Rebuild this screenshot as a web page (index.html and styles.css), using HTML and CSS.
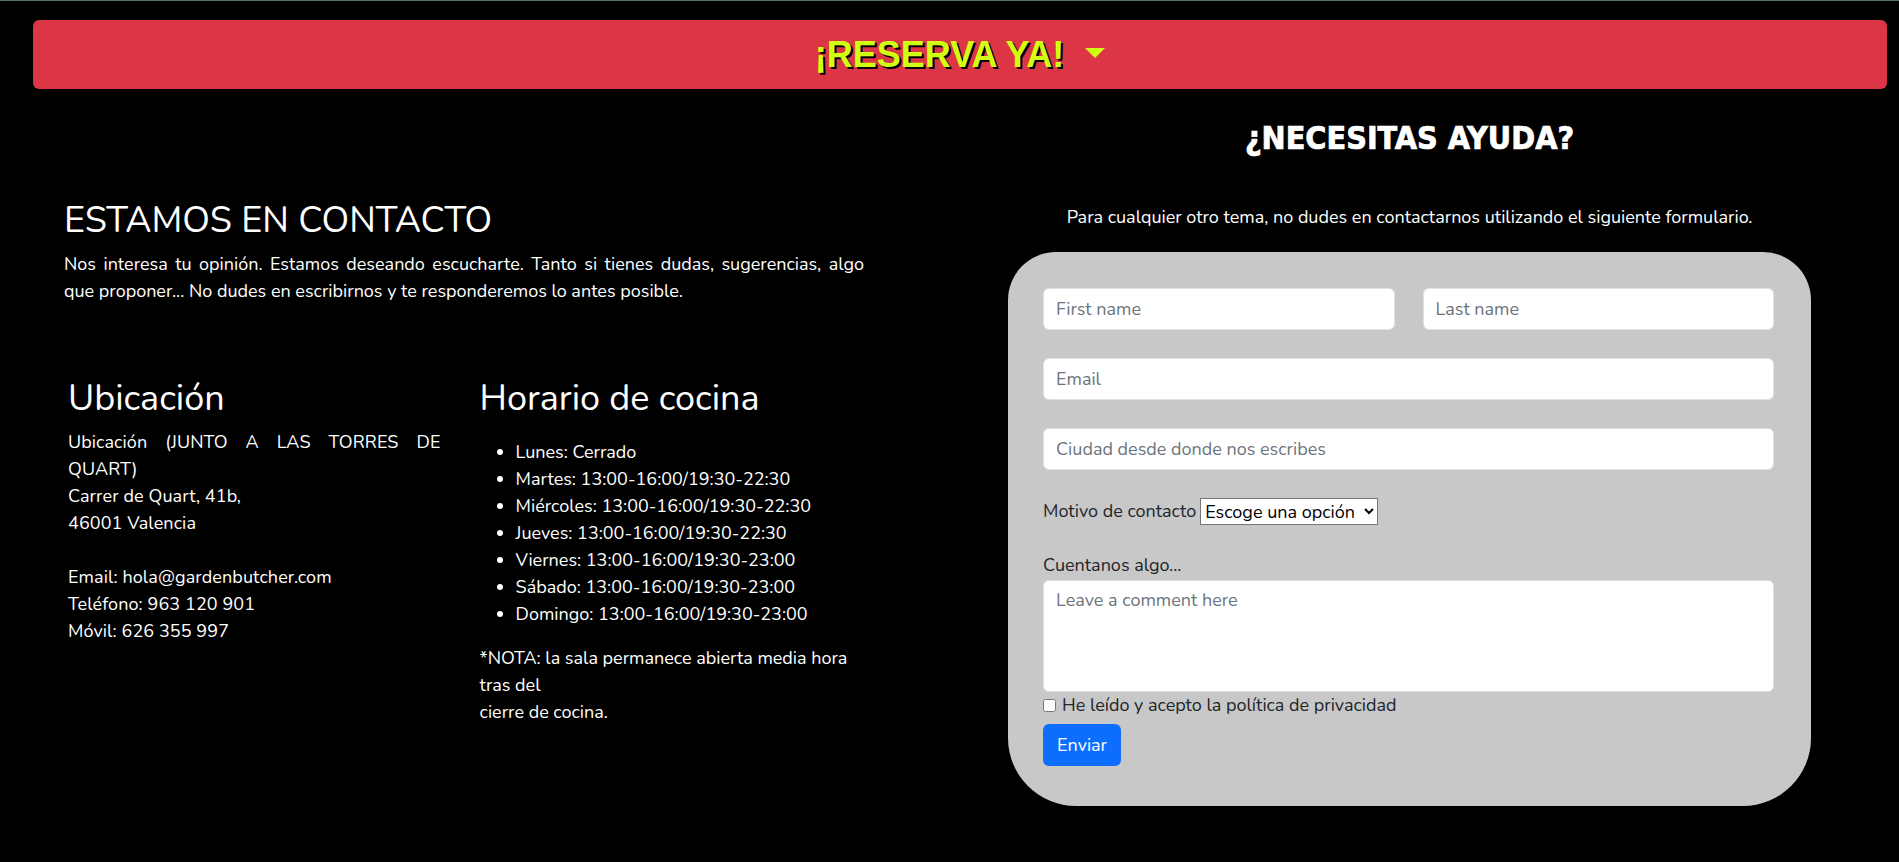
FILE: index.html
```html
<!DOCTYPE html>
<html lang="es">
<head>
<meta charset="utf-8">
<title>Contacto</title>
<link rel="stylesheet" href="styles.css">
</head>
<body>
<div class="reserve-wrap">
  <button class="reserve" type="button"><span class="reserve-text">¡RESERVA YA!</span><span class="caret"></span></button>
</div>
<main class="main">
  <section class="contact">
    <h1 class="contact-title">ESTAMOS EN CONTACTO</h1>
    <p class="intro">Nos interesa tu opinión. Estamos deseando escucharte. Tanto si tienes dudas, sugerencias, algo que proponer... No dudes en escribirnos y te responderemos lo antes posible.</p>
    <div class="info-row">
      <div class="info-col loc">
        <h2 class="info-title">Ubicación</h2>
        <p class="loc-text">Ubicación (JUNTO A LAS TORRES DE QUART)<br>Carrer de Quart, 41b,<br>46001 Valencia<br><br>Email: hola@gardenbutcher.com<br>Teléfono: 963 120 901<br>Móvil: 626 355 997</p>
      </div>
      <div class="info-col hours">
        <h2 class="info-title">Horario de cocina</h2>
        <ul class="hours-list">
          <li>Lunes: Cerrado</li>
          <li>Martes: 13:00-16:00/19:30-22:30</li>
          <li>Miércoles: 13:00-16:00/19:30-22:30</li>
          <li>Jueves: 13:00-16:00/19:30-22:30</li>
          <li>Viernes: 13:00-16:00/19:30-23:00</li>
          <li>Sábado: 13:00-16:00/19:30-23:00</li>
          <li>Domingo: 13:00-16:00/19:30-23:00</li>
        </ul>
        <p class="note">*NOTA: la sala permanece abierta media hora tras del<br>cierre de cocina.</p>
      </div>
    </div>
  </section>
  <section class="help">
    <h2 class="help-title">¿NECESITAS AYUDA?</h2>
    <p class="help-sub">Para cualquier otro tema, no dudes en contactarnos utilizando el siguiente formulario.</p>
    <form class="card">
      <div class="name-row">
        <input class="field" type="text" placeholder="First name">
        <input class="field" type="text" placeholder="Last name">
      </div>
      <input class="field" type="email" placeholder="Email">
      <input class="field" type="text" placeholder="Ciudad desde donde nos escribes">
      <div class="motive-row">
        <label class="motive-label" for="motivo">Motivo de contacto</label>
        <select class="motive-select" id="motivo">
          <option>Escoge una opción</option>
        </select>
      </div>
      <label class="comment-label" for="comment">Cuentanos algo...</label>
      <textarea class="comment" id="comment" placeholder="Leave a comment here"></textarea>
      <label class="privacy"><input class="privacy-check" type="checkbox">He leído y acepto la política de privacidad</label>
      <button class="send" type="button">Enviar</button>
    </form>
  </section>
</main>
</body>
</html>
```

FILE: styles.css
```css
* { box-sizing: border-box; }

body {
  margin: 0;
  background: #000;
  color: #fff;
  border-top: 1px solid #5b6e72;
  font-family: "Nunito", "Noto Sans", "Open Sans", sans-serif;
  font-size: 18px;
  line-height: 27px;
  min-height: 861px;
}

.reserve-wrap {
  padding: 19px 12px 0 33px;
}

.reserve {
  width: 100%;
  height: 69px;
  border: 0;
  border-radius: 6px;
  background: #dc3545;
  display: flex;
  align-items: center;
  justify-content: center;
  gap: 21px;
  cursor: pointer;
  padding: 0;
}

.reserve-text {
  font-family: "Liberation Sans", Arial, sans-serif;
  font-weight: 700;
  font-size: 36px;
  color: #d0ff14;
  text-shadow: 2px 2px 0 #000;
  line-height: 40px;
}

.caret {
  width: 0;
  height: 0;
  border-top: 10px solid #d0ff14;
  border-left: 10px solid transparent;
  border-right: 10px solid transparent;
  margin-bottom: 4px;
}

.main {
  display: flex;
  padding-left: 64px;
}

.contact {
  width: 800px;
  flex: none;
}

.contact-title {
  margin: 111px 0 0;
  font-weight: 400;
  font-size: 36px;
  line-height: 42px;
}

.intro {
  margin: 9px 0 0;
  text-align: justify;
}

.info-row {
  display: flex;
  margin-top: 73px;
}

.info-col.loc {
  width: 378px;
  margin-left: 4px;
}

.info-col.hours {
  width: 390px;
  margin-left: 39px;
}

.info-title {
  margin: 0;
  font-weight: 400;
  font-size: 36px;
  line-height: 42px;
}

.loc-text {
  margin: 9px 0 0;
  text-align: justify;
  letter-spacing: 0.1px;
}

.hours-list {
  margin: 19px 0 0;
  padding-left: 36px;
}

.note {
  margin: 17px 0 0;
}

.help {
  margin-left: 144px;
  width: 803px;
  flex: none;
  display: flex;
  flex-direction: column;
  align-items: center;
}

.help-title {
  margin: 30px 0 0;
  font-family: "DejaVu Sans", sans-serif;
  font-stretch: condensed;
  font-weight: 700;
  font-size: 32px;
  line-height: 38px;
  -webkit-text-stroke: 0.7px #fff;
}

.help-sub {
  margin: 47px 0 0;
}

.card {
  align-self: stretch;
  margin-top: 21px;
  background: #c8c8c8;
  border-radius: 48px 48px 68px 68px;
  padding: 36px 37px 40px 35px;
  display: flex;
  flex-direction: column;
  color: #212529;
}

.name-row {
  display: flex;
  gap: 28px;
  margin-bottom: 28px;
}

.field {
  display: block;
  width: 100%;
  height: 42px;
  border: 1px solid #dee2e6;
  border-radius: 6px;
  background: #fff;
  padding: 0 12px;
  font-family: inherit;
  font-size: 18px;
  color: #212529;
  margin-bottom: 28px;
}

.name-row .field { margin-bottom: 0; }

.field::placeholder,
.comment::placeholder { color: #6c757d; }

.motive-row {
  display: flex;
  align-items: center;
  gap: 4px;
  height: 27px;
}

.motive-select {
  height: 27px;
  width: 178px;
  font-family: inherit;
  font-size: 18px;
  color: #000;
  background: #fff;
  border: 1px solid #767676;
  border-radius: 0;
}

.comment-label {
  margin-top: 27px;
  margin-bottom: 1px;
}

.comment {
  display: block;
  width: 100%;
  height: 112px;
  border: 1px solid #dee2e6;
  border-radius: 6px;
  background: #fff;
  padding: 6px 12px;
  font-family: inherit;
  font-size: 18px;
  line-height: 27px;
  resize: none;
}

.privacy {
  display: flex;
  align-items: center;
}

.privacy-check {
  width: 13px;
  height: 13px;
  margin: 0 6px 0 0;
}

.send {
  align-self: flex-start;
  margin-top: 5px;
  height: 42px;
  padding: 0 14px;
  border: 0;
  border-radius: 6px;
  background: #0d6efd;
  color: #fff;
  font-family: inherit;
  font-size: 18px;
}
```
